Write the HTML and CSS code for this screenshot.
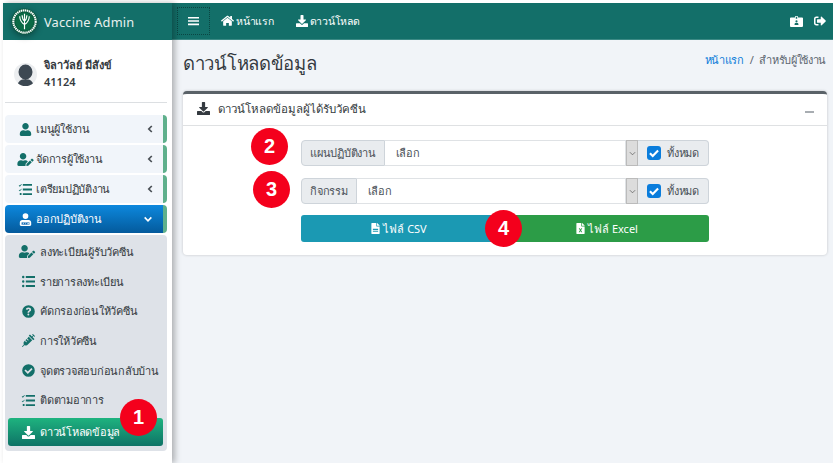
FILE: index.html
```html
<!DOCTYPE html>
<html lang="th">
<head>
  <meta charset="UTF-8" />
  <meta name="viewport" content="width=device-width, initial-scale=1.0"/>
  <title>Vaccine Admin - ดาวน์โหลดข้อมูล</title>
  <link rel="stylesheet" href="styles.css">
</head>
<body>

<svg class="defs" width="0" height="0">
  <symbol id="i-user" viewBox="0 0 448 512"><path d="M224 256c70.700 0 128-57.300 128-128S294.700 0 224 0 96 57.300 96 128s57.300 128 128 128zm89.600 32h-16.700c-22.200 10.200-46.900 16-72.900 16s-50.600-5.800-72.900-16h-16.700C60.200 288 0 348.200 0 422.400V464c0 26.500 21.500 48 48 48h352c26.500 0 48-21.500 48-48v-41.600c0-74.200-60.200-134.400-134.400-134.400z"/></symbol>
  <symbol id="i-user-edit" viewBox="0 0 640 512"><path d="M224 256c70.700 0 128-57.300 128-128S294.700 0 224 0 96 57.300 96 128s57.300 128 128 128zm89.600 32h-16.700c-22.200 10.200-46.900 16-72.900 16s-50.600-5.800-72.900-16h-16.700C60.200 288 0 348.200 0 422.400V464c0 26.500 21.500 48 48 48h274.900c-2.400-6.800-3.400-14-2.600-21.300l6.800-60.900 1.200-11.100 7.900-7.900 77.300-77.300c-24.500-27.700-60-45.500-99.900-45.500zm45.300 145.300l-6.800 61c-1.100 10.200 7.500 18.800 17.600 17.600l60.900-6.800 137.900-137.900-71.700-71.700-137.900 137.800zM633 268.900L595.100 231c-9.300-9.300-24.500-9.300-33.800 0l-37.800 37.800-4.100 4.100 71.800 71.700 41.800-41.800c9.300-9.400 9.300-24.500 0-33.900z"/></symbol>
  <symbol id="i-list" viewBox="0 0 512 512"><path d="M0 80a48 48 0 1 0 96 0 48 48 0 1 0-96 0zM0 256a48 48 0 1 0 96 0 48 48 0 1 0-96 0zM0 432a48 48 0 1 0 96 0 48 48 0 1 0-96 0zM150 40h362v80H150zM150 216h362v80H150zM150 392h362v80H150z"/></symbol>
  <symbol id="i-tasks" viewBox="0 0 512 512"><path d="M150 40h362v70H150zM150 221h362v70H150zM150 402h362v70H150zM30 392h70v80H30zM10 80l24 22 56-62 20 18-76 86-44-40zM10 262l24 22 56-62 20 18-76 86-44-40z"/></symbol>
  <symbol id="i-nurse" viewBox="0 0 448 512"><path d="M224 232a112 112 0 1 0 0-224 112 112 0 1 0 0 224zM96 280h256c53 0 96 43 96 96v88c0 26-21 48-48 48H48c-27 0-48-22-48-48v-88c0-53 43-96 96-96z"/><path fill="#0b67b3" d="M70 370h308v90H70z"/><path d="M104 440l34-60h30l-32 60zM180 380h90v16h-36v44h-18v-44h-36zM290 440l26-60h24l26 60z" /></symbol>
  <symbol id="i-download" viewBox="0 0 512 512"><path d="M216 0h80c13.300 0 24 10.700 24 24v168h87.700c17.800 0 26.700 21.500 14.100 34.100L269.700 378.300c-7.500 7.500-19.800 7.500-27.300 0L90.100 226.100c-12.600-12.600-3.700-34.100 14.100-34.100H192V24c0-13.300 10.700-24 24-24zm296 376v112c0 13.300-10.700 24-24 24H24c-13.300 0-24-10.700-24-24V376c0-13.300 10.700-24 24-24h146.700l49 49c20.100 20.100 52.500 20.100 72.600 0l49-49H488c13.300 0 24 10.700 24 24z"/></symbol>
  <symbol id="i-question" viewBox="0 0 512 512"><path fill-rule="evenodd" d="M256 8a248 248 0 1 0 0 496 248 248 0 1 0 0-496zm-4 90c62 0 106 36 106 88 0 40-24 58-50 74-18 11-24 18-24 34v10h-64v-16c0-34 16-50 42-66 20-12 30-20 30-34 0-16-16-28-38-28-24 0-38 12-44 34l-60-24c12-44 50-72 102-72zm-2 236a38 38 0 1 1 0 76 38 38 0 1 1 0-76z"/></symbol>
  <symbol id="i-syringe" viewBox="0 0 512 512"><path d="M201.500 174.800l55.700 55.800c3.100 3.100 3.100 8.200 0 11.300l-11.300 11.300c-3.100 3.100-8.200 3.100-11.300 0l-55.700-55.800-45.300 45.300 55.800 55.800c3.100 3.100 3.100 8.200 0 11.300l-11.300 11.300c-3.100 3.100-8.200 3.100-11.300 0L111 265.200l-26.400 26.400c-17.300 17.300-25.600 41.100-23 65.400l7.100 64.600-67.900 67.900c-3.100 3.100-3.100 8.200 0 11.300l11.300 11.300c3.100 3.100 8.200 3.100 11.300 0l67.900-67.900 64.600 7.100c23.900 2.600 47.900-5.400 65.400-23l181.900-181.900-135.700-135.700-64.800 64.900zm308.200-93.200L430.500 2.300c-3.100-3.100-8.200-3.100-11.300 0l-11.300 11.300c-3.100 3.100-3.100 8.200 0 11.300l28.300 28.300-45.300 45.300-56.600-56.600-17-17c-3.100-3.100-8.200-3.100-11.300 0l-33.900 33.900c-3.100 3.100-3.100 8.200 0 11.300l17 17L424.800 223l17 17c3.100 3.100 8.200 3.100 11.300 0l33.900-34c3.100-3.100 3.100-8.200 0-11.300l-73.600-73.600 45.300-45.300 28.300 28.300c3.100 3.100 8.200 3.100 11.300 0l11.300-11.300c3.100-3.200 3.100-8.200 0-11.300z"/></symbol>
  <symbol id="i-check-circle" viewBox="0 0 512 512"><path fill-rule="evenodd" d="M256 8a248 248 0 1 0 0 496 248 248 0 1 0 0-496zm-28 384L96 260l46-46 86 86 142-142 46 46z"/></symbol>
  <symbol id="i-home" viewBox="0 0 576 512"><path d="M288 110L96 268v180c0 9 7 16 16 16h116V340h120v124h116c9 0 16-7 16-16V268zM570 238l-84-70V40c0-6-5-10-10-10h-56c-6 0-10 4-10 10v66l-90-74c-18-14-46-14-64 0L6 238c-4 4-5 10-1 14l26 30c4 4 10 5 14 1L288 84l243 199c4 4 10 3 14-1l26-30c3-4 3-10-1-14z"/></symbol>
  <symbol id="i-idcard" viewBox="0 0 512 512"><path fill-rule="evenodd" d="M36 96h160V72c0-18 14-32 32-32h56c18 0 32 14 32 32v24h160c20 0 36 16 36 36v304c0 20-16 36-36 36H36c-20 0-36-16-36-36V132c0-20 16-36 36-36zm192-24v72h56V72zM256 210a42 42 0 1 0 0 84 42 42 0 1 0 0-84zm-76 180h152v-28c0-24-20-44-44-44h-64c-24 0-44 20-44 44z"/></symbol>
  <symbol id="i-signout" viewBox="0 0 512 512"><path d="M497 273L329 441c-15 15-41 4-41-17v-96H152c-13 0-24-11-24-24v-96c0-13 11-24 24-24h136V88c0-21 26-32 41-17l168 168c9 10 9 24 0 34zM192 436v-40c0-7-5-12-12-12H96c-18 0-32-14-32-32V160c0-18 14-32 32-32h84c7 0 12-5 12-12V76c0-7-5-12-12-12H96C43 64 0 107 0 160v192c0 53 43 96 96 96h84c7 0 12-5 12-12z"/></symbol>
  <symbol id="i-file-csv" viewBox="0 0 384 512"><path fill-rule="evenodd" d="M224 136V0H24C11 0 0 11 0 24v464c0 13 11 24 24 24h336c13 0 24-11 24-24V160H248c-13 0-24-11-24-24zM70 270h244v50H70zM70 360h244v50H70zM384 122v6H256V0h6c6 0 12 3 17 7l98 98c4 5 7 11 7 17z"/></symbol>
  <symbol id="i-file-excel" viewBox="0 0 384 512"><path fill-rule="evenodd" d="M224 136V0H24C11 0 0 11 0 24v464c0 13 11 24 24 24h336c13 0 24-11 24-24V160H248c-13 0-24-11-24-24zM384 122v6H256V0h6c6 0 12 3 17 7l98 98c4 5 7 11 7 17zM110 240h50l32 58 32-58h50l-56 94 56 94h-50l-32-58-32 58h-50l56-94z"/></symbol>
  <symbol id="i-chev" viewBox="0 0 6 8"><path d="M4.800 1L1.800 4l3 3" fill="none" stroke="currentColor" stroke-width="1.700"/></symbol>
</svg>

<div class="app">

  <aside class="sidebar">
    <div class="brand">
      <svg class="logo" viewBox="0 0 28 28">
        <circle cx="14" cy="14" r="13.500" fill="#0a5a3e"/>
        <circle cx="14" cy="14" r="11.600" fill="none" stroke="#fff" stroke-width="2.200" stroke-dasharray="1.500 .6"/>
        <circle cx="14" cy="14" r="9.400" fill="#0a6a45"/>
        <path d="M14 6v16M9 8.500c.3 4.500 2.300 7 5 8.500 2.700-1.500 4.700-4 5-8.500M11.500 7.500c.2 3 1 5 2.500 6 1.500-1 2.300-3 2.500-6" fill="none" stroke="#fff" stroke-width="1.200"/>
      </svg>
      <span class="brand-name">Vaccine Admin</span>
    </div>

    <div class="user-panel">
      <div class="avatar">
        <svg viewBox="0 0 23 23"><path d="M11.500 1.500a7 7.500 0 1 0 0 15 7 7.500 0 1 0 0-15zM3.500 23c0-3.500 2.500-6 5-6.500h6c2.500.5 5 3 5 6.500z"/></svg>
      </div>
      <div class="user-info">
        <div>จิลาวัลย์ มีสังข์</div>
        <div>41124</div>
      </div>
    </div>

    <nav class="menu">
      <a class="menu-item"><svg class="ic"><use href="#i-user"/></svg><span>เมนูผู้ใช้งาน</span><svg class="chev"><use href="#i-chev"/></svg></a>
      <a class="menu-item"><svg class="ic ic-wide"><use href="#i-user-edit"/></svg><span>จัดการผู้ใช้งาน</span><svg class="chev"><use href="#i-chev"/></svg></a>
      <a class="menu-item"><svg class="ic"><use href="#i-tasks"/></svg><span>เตรียมปฏิบัติงาน</span><svg class="chev"><use href="#i-chev"/></svg></a>
      <a class="menu-item open"><svg class="ic"><use href="#i-nurse"/></svg><span>ออกปฏิบัติงาน</span>
        <svg class="chev-down" viewBox="0 0 12 8"><path d="M2 1.500l4 4 4-4" fill="none" stroke="#fff" stroke-width="2"/></svg>
      </a>

      <div class="submenu">
        <a class="sub-item"><svg class="ic ic-wide"><use href="#i-user-edit"/></svg>ลงทะเบียนผู้รับวัคซีน</a>
        <a class="sub-item"><svg class="ic"><use href="#i-list"/></svg>รายการลงทะเบียน</a>
        <a class="sub-item"><svg class="ic"><use href="#i-question"/></svg>คัดกรองก่อนให้วัคซีน</a>
        <a class="sub-item"><svg class="ic"><use href="#i-syringe"/></svg>การให้วัคซีน</a>
        <a class="sub-item"><svg class="ic"><use href="#i-check-circle"/></svg>จุดตรวจสอบก่อนกลับบ้าน</a>
        <a class="sub-item"><svg class="ic"><use href="#i-tasks"/></svg>ติดตามอาการ</a>
        <a class="sub-item active"><svg class="ic"><use href="#i-download"/></svg>ดาวน์โหลดข้อมูล</a>
        <span class="step step-1">1</span>
      </div>
    </nav>
  </aside>

  <div class="main">
    <header class="topbar">
      <a class="toggle">
        <svg viewBox="0 0 12 10"><path d="M0 .5h12v1.800H0zM0 4.100h12v1.800H0zM0 7.700h12v1.800H0z"/></svg>
      </a>
      <a class="top-link"><svg class="ic-home"><use href="#i-home"/></svg>หน้าแรก</a>
      <a class="top-link"><svg class="ic-dl"><use href="#i-download"/></svg>ดาวน์โหลด</a>
      <div class="top-right">
        <svg class="ic-card"><use href="#i-idcard"/></svg>
        <svg class="ic-out"><use href="#i-signout"/></svg>
      </div>
    </header>

    <section class="content">
      <div class="page-head">
        <h1>ดาวน์โหลดข้อมูล</h1>
        <div class="crumbs"><a>หน้าแรก</a><i>/</i>สำหรับผู้ใช้งาน</div>
      </div>

      <div class="card">
        <div class="card-head">
          <svg class="ic-dl"><use href="#i-download"/></svg>
          <span>ดาวน์โหลดข้อมูลผู้ได้รับวัคซีน</span>
          <em class="collapse"></em>
        </div>
        <div class="card-body">
          <div class="form-row">
            <span class="step step-2">2</span>
            <label class="addon">แผนปฏิบัติงาน</label>
            <div class="select">เลือก</div>
            <div class="arrow"><svg viewBox="0 0 8 5"><path d="M1 1l3 3 3-3" fill="none" stroke="#555" stroke-width=".8"/></svg></div>
            <label class="addon all"><span class="check"><svg viewBox="0 0 12 12"><path d="M2.500 6.200l2.400 2.400 4.600-4.800" fill="none" stroke="#fff" stroke-width="1.800"/></svg></span>ทั้งหมด</label>
          </div>
          <div class="form-row">
            <span class="step step-3">3</span>
            <label class="addon">กิจกรรม</label>
            <div class="select">เลือก</div>
            <div class="arrow"><svg viewBox="0 0 8 5"><path d="M1 1l3 3 3-3" fill="none" stroke="#555" stroke-width=".8"/></svg></div>
            <label class="addon all"><span class="check"><svg viewBox="0 0 12 12"><path d="M2.500 6.200l2.400 2.400 4.600-4.800" fill="none" stroke="#fff" stroke-width="1.800"/></svg></span>ทั้งหมด</label>
          </div>
          <div class="form-buttons">
            <button class="btn btn-csv"><svg class="ic-file"><use href="#i-file-csv"/></svg>ไฟล์ CSV</button>
            <button class="btn btn-excel"><svg class="ic-file"><use href="#i-file-excel"/></svg>ไฟล์ Excel</button>
            <span class="step step-4">4</span>
          </div>
        </div>
      </div>
    </section>
  </div>

</div>

</body>
</html>
```

FILE: styles.css
```css
* {
  box-sizing: border-box;
}
html, body {
  height: 100%;
}
body {
  margin: 0;
  padding: 3px 4px 0 3px;
  background: #fff;
  font-family: "Noto Sans", "Liberation Sans", sans-serif;
  font-size: 11px;
  letter-spacing: -0.25px;
  color: #343a40;
  overflow: hidden;
}
.defs {
  position: absolute;
}
svg {
  fill: currentColor;
  display: block;
}
a {
  color: inherit;
  text-decoration: none;
}
.app {
  display: flex;
  height: 460px;
  background: #f1f4f8;
}

/* sidebar */
.sidebar {
  width: 169px;
  flex: none;
  background: #fff;
  box-shadow: 3px 0 6px rgba(0,0,0,0.28);
  position: relative;
}
.brand {
  height: 37px;
  background: #136f69;
  display: flex;
  align-items: center;
  padding-left: 8px;
  color: #e9f1f0;
}
.logo {
  width: 27px;
  height: 27px;
  margin-right: 6px;
  filter: drop-shadow(0 2px 3px rgba(0,0,0,0.35));
}
.brand-name {
  font-size: 12.800px;
  letter-spacing: 0.2px;
}
.user-panel {
  display: flex;
  align-items: center;
  margin: 0 5px 0 2px;
  height: 63px;
  padding: 6px 0 0 9px;
  border-bottom: 1px solid #dcdfe2;
}
.avatar {
  width: 23px;
  height: 23px;
  border-radius: 50%;
  background: #eceef0;
  color: #3d4852;
  overflow: hidden;
  flex: none;
}
.avatar svg {
  width: 23px;
  height: 23px;
}
.user-info {
  margin: -3px 0 0 7px;
  font-weight: 600;
  letter-spacing: 0;
  line-height: 17px;
}
.menu {
  margin: 12px 5px 0 2px;
  display: flex;
  flex-direction: column;
  gap: 2px;
}
.menu-item {
  height: 28px;
  background: #f1f5fa;
  border-right: 4px solid #5fb08c;
  border-radius: 4px;
  display: flex;
  align-items: center;
  padding: 0 10px 0 0;
  font-weight: 500;
}
.ic {
  width: 15px;
  height: 13px;
  margin: 0 3px 0 13px;
  color: #136f69;
  flex: none;
}
.ic-wide {
  width: 19px;
  margin: 0 1px 0 11px;
}
.menu-item span {
  flex: 1;
}
.chev {
  width: 6px;
  height: 8px;
  color: #4a5056;
}
.menu-item.open {
  background: linear-gradient(#0d88dd, #045a9c);
  color: #fff;
}
.menu-item.open .ic {
  color: #fff;
}
.chev-down {
  width: 10px;
  height: 7px;
}
.submenu {
  position: relative;
  background: #dee2e8;
  border-radius: 4px;
  padding: 2px 4px 5px 3px;
  height: 216px;
}
.sub-item {
  height: 29.700px;
  display: flex;
  align-items: center;
  white-space: nowrap;
  font-weight: 500;
}
.sub-item .ic {
  margin: 0 4px 0 13px;
  width: 15px;
}
.sub-item .ic-wide {
  width: 18px;
  margin: 0 4px 0 10px;
}
.sub-item.active {
  height: 28px;
  margin-top: 3px;
  border-radius: 3px;
  background: linear-gradient(#1eb37f, #0e7366);
  color: #fff;
}
.sub-item.active .ic {
  color: #fff;
}

/* numbered markers */
.step {
  position: absolute;
  width: 37px;
  height: 37px;
  border-radius: 50%;
  background: #f4001c;
  color: #fff;
  font-family: "Liberation Sans", sans-serif;
  font-size: 20px;
  font-weight: 700;
  letter-spacing: 0;
  display: flex;
  align-items: center;
  justify-content: center;
}
.step-1 {
  left: 115px;
  top: 164px;
}
.step-2 {
  left: -50px;
  top: -12px;
}
.step-3 {
  left: -48px;
  top: -7px;
}
.step-4 {
  left: 184px;
  top: -5px;
}

/* top bar */
.main {
  flex: 1;
  min-width: 0;
}
.topbar {
  height: 37px;
  background: #136f69;
  border-bottom: 1px solid #3c8a85;
  color: #fff;
  font-size: 10.500px;
  display: flex;
  align-items: center;
  padding: 0 7px 0 5px;
}
.toggle {
  width: 33px;
  height: 28px;
  margin-right: 11px;
  border: 1px dotted #0b4542;
  display: flex;
  align-items: center;
  justify-content: center;
}
.toggle svg {
  width: 11px;
  height: 10px;
}
.top-link {
  display: flex;
  align-items: center;
  margin-right: 22px;
  white-space: nowrap;
}
.ic-home {
  width: 13px;
  height: 12px;
  margin-right: 2px;
}
.ic-dl {
  width: 12px;
  height: 12px;
  margin-right: 2px;
}
.top-right {
  margin-left: auto;
  display: flex;
  align-items: center;
  gap: 11px;
}
.ic-card {
  width: 13px;
  height: 13px;
}
.ic-out {
  width: 12px;
  height: 12px;
}

/* page */
.content {
  padding: 0 6px 0 11px;
}
.page-head {
  display: flex;
  justify-content: space-between;
  align-items: center;
  height: 51px;
  padding-bottom: 5px;
}
h1 {
  margin: 0;
  font-size: 18.500px;
  letter-spacing: -0.3px;
  font-weight: 500;
}
.crumbs {
  color: #5c6670;
  letter-spacing: -0.35px;
  margin: 0 1px 6px 0;
}
.crumbs a {
  color: #0b7bd8;
  font-weight: 500;
}
.crumbs i {
  font-style: normal;
  margin: 0 6px;
}
.card {
  height: 164px;
  background: #fff;
  border-top: 3px solid #5a6268;
  border-radius: 4px;
  box-shadow: 0 0 3px rgba(0,0,0,0.2);
}
.card-head {
  height: 32px;
  display: flex;
  align-items: center;
  padding: 0 13px 2px 14px;
  border-bottom: 1px solid #dfe1e3;
  font-size: 11.500px;
  letter-spacing: 0;
  font-weight: 500;
}
.card-head .ic-dl {
  width: 13px;
  height: 13px;
  margin-right: 8px;
  color: #343a40;
}
.collapse {
  width: 9px;
  height: 2px;
  margin: 6px 0 0 auto;
  background: #a8adb2;
}
.card-body {
  width: 408px;
  margin-left: 118px;
  padding-top: 14px;
}
.form-row {
  display: flex;
  position: relative;
  height: 26px;
  margin-bottom: 12px;
}
.addon {
  display: flex;
  align-items: center;
  padding: 0 8px;
  background: #e9ecef;
  border: 1px solid #ced4da;
  border-radius: 4px 0 0 4px;
  color: #495057;
}
.select {
  flex: 1;
  display: flex;
  align-items: center;
  padding-left: 11px;
  border: 1px solid #dfe2e5;
  border-left: 0;
  color: #495057;
}
.arrow {
  width: 12px;
  background: #dcdcdc;
  border: 1px solid #bbb;
  display: flex;
  align-items: center;
  justify-content: center;
}
.arrow svg {
  width: 7px;
  height: 5px;
}
.addon.all {
  width: 71px;
  flex: none;
  padding: 0 0 0 9px;
  border-left: 0;
  border-radius: 0 4px 4px 0;
}
.check {
  width: 14px;
  height: 14px;
  border-radius: 3px;
  background: #0a7ddc;
  margin-right: 6px;
}
.form-buttons {
  display: flex;
  position: relative;
  margin-top: -1px;
}
.btn {
  height: 27px;
  border: 0;
  font: inherit;
  letter-spacing: 0;
  color: #fff;
  display: flex;
  align-items: center;
  justify-content: center;
}
.btn-csv {
  width: 194px;
  padding-left: 8px;
  background: #1b99b3;
  border-radius: 3px 0 0 3px;
}
.btn-excel {
  flex: 1;
  padding-left: 16px;
  background: #2c9c47;
  border-radius: 0 3px 3px 0;
}
.ic-file {
  width: 9px;
  height: 11px;
  margin-right: 3px;
}
```
